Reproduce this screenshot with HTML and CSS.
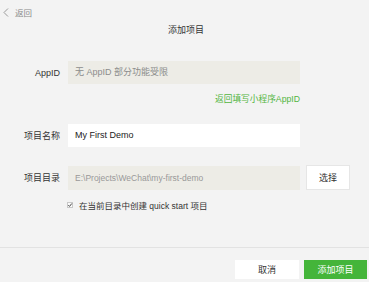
FILE: index.html
```html
<!DOCTYPE html>
<html>
<head>
<meta charset="utf-8">
<link rel="stylesheet" href="styles.css">
</head>
<body>
<div class="page">
  <div class="back">
    <svg class="chev" width="6" height="9" viewBox="0 0 6 9"><polyline points="5,0.5 1,4.5 5,8.5" fill="none" stroke="#999" stroke-width="1"/></svg>
    <span>返回</span>
  </div>
  <div class="title">添加项目</div>
  <div class="form">
    <div class="row r1">
      <div class="label">AppID</div>
      <div class="field disabled">无 AppID 部分功能受限</div>
    </div>
    <div class="linkrow"><span class="link">返回填写小程序AppID</span></div>
    <div class="row r2">
      <div class="label">项目名称</div>
      <div class="field white">My First Demo</div>
    </div>
    <div class="row r3">
      <div class="label">项目目录</div>
      <div class="field disabled path">E:\Projects\WeChat\my-first-demo</div>
      <div class="btn choose">选择</div>
    </div>
    <div class="check">
      <svg class="box" width="6" height="6" viewBox="0 0 6 6"><rect x="0.5" y="0.5" width="5" height="5" fill="#fafafa" stroke="#c8c8c8"/><polyline points="1.3,3.2 2.5,4.4 4.8,1.5" fill="none" stroke="#444" stroke-width="1"/></svg>
      <span>在当前目录中创建 quick start 项目</span>
    </div>
  </div>
  <div class="divider"></div>
  <div class="footer">
    <div class="btn cancel">取消</div>
    <div class="btn primary">添加项目</div>
  </div>
</div>
</body>
</html>
```
FILE: styles.css
```css
html, body {
  margin: 0;
  padding: 0;
}
body {
  background: #f3f3f3;
  font-family: "Liberation Sans", "Noto Sans CJK SC", sans-serif;
  font-size: 9px;
  color: #333;
}
.page {
  width: 369px;
  height: 282px;
  overflow: hidden;
}
.back {
  display: flex;
  align-items: center;
  height: 12px;
  padding: 6px 0 0 3px;
  color: #8a8a8a;
  font-size: 8.5px;
}
.chev {
  margin-right: 6px;
}
.title {
  text-align: center;
  margin-top: 6px;
  height: 12px;
  line-height: 12px;
  padding-left: 3px;
  color: #333;
}
.form {
  padding-top: 25px;
}
.row {
  display: flex;
  align-items: center;
}
.label {
  width: 60px;
  text-align: right;
  margin-right: 8px;
  color: #333;
}
.field {
  width: 232px;
  height: 23px;
  line-height: 23px;
  padding-left: 7px;
  box-sizing: border-box;
}
.disabled {
  background: #edece6;
  color: #8c8c8c;
}
.white {
  background: #fff;
  color: #222;
}
.path {
  height: 24px;
  line-height: 24px;
  color: #999;
  font-size: 8.5px;
}
.linkrow {
  width: 300px;
  text-align: right;
  margin-top: 9px;
  height: 12px;
  line-height: 12px;
  font-size: 8.7px;
}
.link {
  color: #52b53f;
}
.r2 {
  margin-top: 19px;
}
.r3 {
  margin-top: 18px;
}
.btn {
  display: flex;
  align-items: center;
  justify-content: center;
  box-sizing: border-box;
}
.choose {
  width: 44px;
  height: 25px;
  margin-left: 6px;
  background: #fff;
  border: 1px solid #e6e6e6;
  color: #333;
}
.check {
  display: flex;
  align-items: center;
  margin: 10px 0 0 67px;
  height: 10px;
  font-size: 8.5px;
}
.box {
  margin-right: 6px;
}
.divider {
  margin-top: 37px;
  height: 1px;
  background: #e2e2e2;
}
.footer {
  display: flex;
  justify-content: flex-end;
  padding: 12px 2px 0 0;
  gap: 5px;
}
.cancel {
  width: 64px;
  height: 19px;
  background: #fff;
  color: #333;
}
.primary {
  width: 63px;
  height: 19px;
  background: #44b53a;
  color: #fff;
}
```
